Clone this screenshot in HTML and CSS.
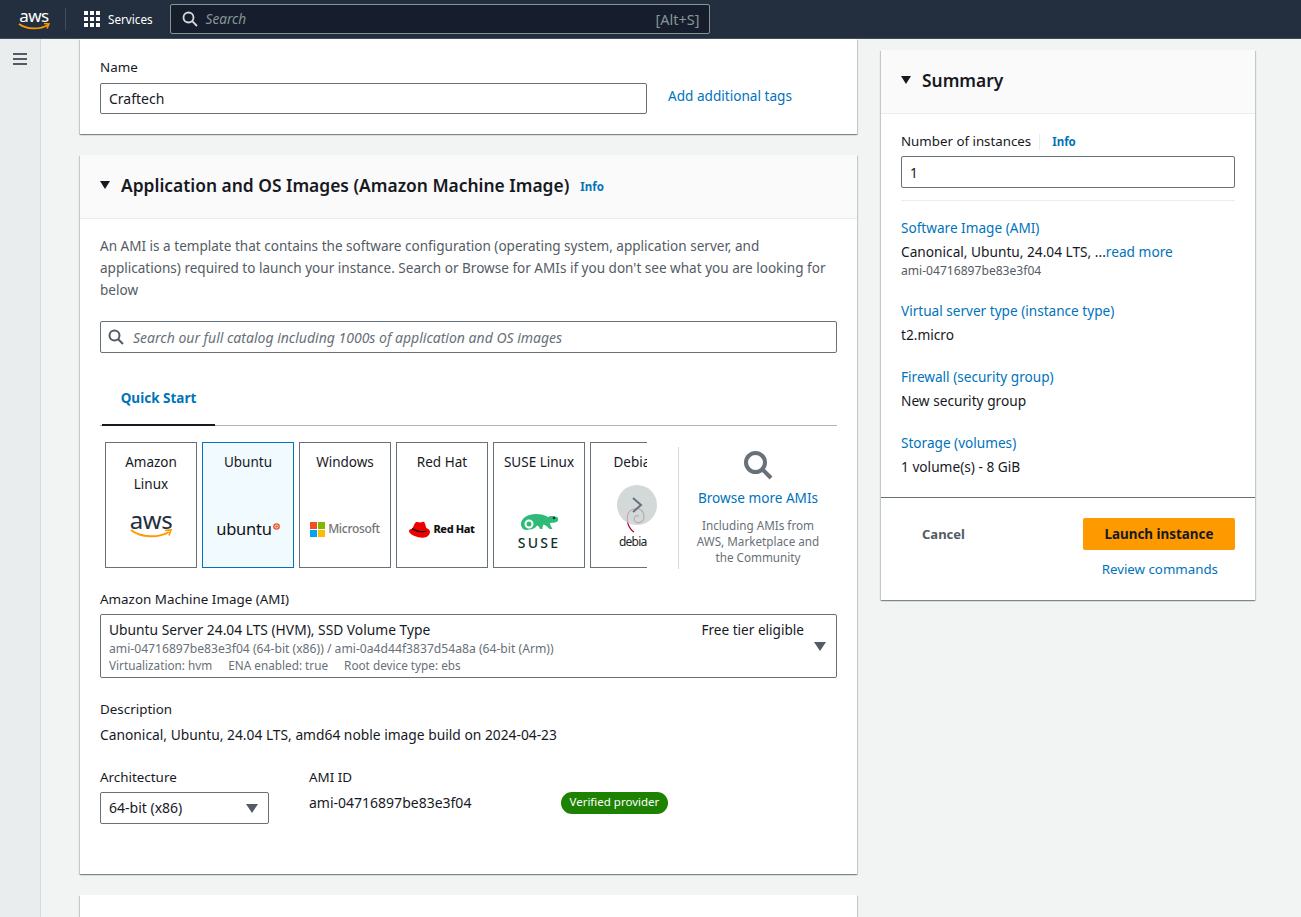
FILE: index.html
```html
<!DOCTYPE html>
<html>
<head>
  <title>Launch an instance</title>
  <meta charset="UTF-8" />
  <link rel="stylesheet" href="styles.css">
</head>
<body>

  <header class="topbar">
    <div class="aws-logo">
      <span class="aws-word">aws</span>
      <svg class="smile" width="32" height="8" viewBox="0 0 32 8"><path d="M1 1c8 5.500 20 6 29 1" fill="none" stroke="#ff9900" stroke-width="1.800"/><path d="M26 .5l5 .5-2 4.500" fill="none" stroke="#ff9900" stroke-width="1.500"/></svg>
    </div>
    <div class="top-sep"></div>
    <div class="services">
      <svg width="18" height="18" viewBox="0 0 18 18" fill="#fff"><rect x="1" y="1" width="4" height="4"/><rect x="7" y="1" width="4" height="4"/><rect x="13" y="1" width="4" height="4"/><rect x="1" y="7" width="4" height="4"/><rect x="7" y="7" width="4" height="4"/><rect x="13" y="7" width="4" height="4"/><rect x="1" y="13" width="4" height="4"/><rect x="7" y="13" width="4" height="4"/><rect x="13" y="13" width="4" height="4"/></svg>
      <span>Services</span>
    </div>
    <div class="top-search">
      <svg width="16" height="16" viewBox="0 0 16 16" fill="none" stroke="#d5dbdb" stroke-width="1.800"><circle cx="6.500" cy="6.500" r="5"/><path d="M10.200 10.200L15 15"/></svg>
      <span class="top-search-text">Search</span>
      <span class="shortcut">[Alt+S]</span>
    </div>
  </header>

  <div class="layout">
    <nav class="rail">
      <svg width="14" height="12" viewBox="0 0 14 12" fill="#545b64"><rect y="0" width="14" height="2"/><rect y="5" width="14" height="2"/><rect y="10" width="14" height="2"/></svg>
    </nav>

    <main class="content">
      <div class="left-col">

        <section class="card name-card">
          <div class="label">Name</div>
          <div class="name-row">
            <div class="input name-input">Craftech</div>
            <a class="link">Add additional tags</a>
          </div>
        </section>

        <section class="card ami-card">
          <div class="card-head">
            <span class="caret"></span>
            <h2>Application and OS Images (Amazon Machine Image)</h2>
            <a class="info">Info</a>
          </div>
          <div class="card-body">
            <p class="intro">An AMI is a template that contains the software configuration (operating system, application server, and applications) required to launch your instance. Search or Browse for AMIs if you don't see what you are looking for below</p>

            <div class="input ami-search">
              <svg width="16" height="16" viewBox="0 0 16 16" fill="none" stroke="#545b64" stroke-width="2"><circle cx="6.500" cy="6.500" r="5"/><path d="M10.200 10.200L15 15"/></svg>
              <span>Search our full catalog including 1000s of application and OS images</span>
            </div>

            <div class="tabs"><div class="tab">Quick Start</div></div>

            <div class="picker">
              <div class="carousel">
                <div class="tile-strip">
                  <div class="tile">
                    <div class="tile-name">Amazon Linux</div>
                    <div class="logo-aws">
                      <span>aws</span>
                      <svg width="42" height="10" viewBox="0 0 42 10"><path d="M1 1c10 8 28 8 38 2" fill="none" stroke="#ff9900" stroke-width="2"/><path d="M35 1.500l6-.5-2 5.500" fill="none" stroke="#ff9900" stroke-width="1.600"/></svg>
                    </div>
                  </div>
                  <div class="tile selected">
                    <div class="tile-name">Ubuntu</div>
                    <div class="tile-logo">
                      <span class="logo-ubuntu">ubuntu</span>
                      <svg class="ubuntu-mark" width="7" height="7" viewBox="0 0 8 8"><circle cx="4" cy="4" r="3.800" fill="#e95420"/><circle cx="4" cy="4" r="1.800" fill="none" stroke="#fff" stroke-width=".9"/></svg>
                    </div>
                  </div>
                  <div class="tile">
                    <div class="tile-name">Windows</div>
                    <div class="tile-logo tile-logo-ms">
                      <svg width="15" height="15" viewBox="0 0 15 15"><rect width="7" height="7" fill="#f25022"/><rect x="8" width="7" height="7" fill="#7fba00"/><rect y="8" width="7" height="7" fill="#00a4ef"/><rect x="8" y="8" width="7" height="7" fill="#ffb900"/></svg>
                      <span class="logo-ms">Microsoft</span>
                    </div>
                  </div>
                  <div class="tile">
                    <div class="tile-name">Red Hat</div>
                    <div class="tile-logo tile-logo-rh">
                      <svg width="21" height="17" viewBox="0 0 21 17"><path d="M6.500 1.500C8 .5 10 1.500 11.500 1.500S14 .5 15 1c1 .6 1.500 3.500 2.300 6 2 .8 3.700 2 3.700 3.700 0 3-3 6-7.500 6C7 16.700 0 13 0 10c0-1.500 1.500-2.300 3-2 1-.5 2.500-6 3.500-6.500z" fill="#e00"/><path d="M3 7.500c3 2.500 9.500 4.200 14.500 2.500" fill="none" stroke="#111" stroke-width="1.300"/></svg>
                      <span class="logo-rh">Red Hat</span>
                    </div>
                  </div>
                  <div class="tile">
                    <div class="tile-name">SUSE Linux</div>
                    <div class="tile-logo-suse">
                      <svg width="39" height="20" viewBox="0 0 39 20"><path d="M1 11C1 5 8 1 16 1c5 0 9 1 12 3 2-1.500 6-1.500 9 0 1.500 1 1.500 3 .5 4.500-2 1.500-5 1-7.500 1.500 0 2 1.500 4 2.500 6h-3c-2-2-3.500-4-6-4.500-1 2-1 3-1 4.500H20c-.5-1.500-1-3-3-3.500-1 2-4 4-8 4C4 18 1 15 1 11z" fill="#30ba78"/><circle cx="9" cy="11" r="3.500" fill="none" stroke="#fff" stroke-width="2"/><circle cx="34" cy="5" r="1.300" fill="#0c322c"/></svg>
                      <span class="logo-suse">SUSE</span>
                    </div>
                  </div>
                  <div class="tile">
                    <div class="tile-name">Debian</div>
                    <div class="tile-logo-debian">
                      <svg width="19" height="25" viewBox="0 0 19 25"><path d="M8 24C2 20 0 12 2 6 4 1 11-1 15 2c4 3 4 10 0 12-3 2-7 0-7-3s3-4 5-3" fill="none" stroke="#a80030" stroke-width="1.100"/></svg>
                      <span class="logo-debian">debian</span>
                    </div>
                  </div>
                </div>
                <div class="next-btn">
                  <svg width="12" height="18" viewBox="0 0 12 18" fill="none" stroke="#687078" stroke-width="2"><path d="M2 2l8 7-8 7"/></svg>
                </div>
              </div>
              <div class="browse">
                <svg width="30" height="30" viewBox="0 0 30 30" fill="none" stroke="#687078" stroke-width="4"><circle cx="12.500" cy="12.500" r="9.500"/><path d="M19.500 19.500L28 28"/></svg>
                <a class="link browse-link">Browse more AMIs</a>
                <p>Including AMIs from AWS, Marketplace and the Community</p>
              </div>
            </div>

            <div class="label ami-label">Amazon Machine Image (AMI)</div>
            <div class="ami-select">
              <div class="ami-top">
                <span>Ubuntu Server 24.04 LTS (HVM), SSD Volume Type</span>
                <span class="free">Free tier eligible</span>
              </div>
              <div class="ami-sub ami-ids">ami-04716897be83e3f04 (64-bit (x86)) / ami-0a4d44f3837d54a8a (64-bit (Arm))</div>
              <div class="ami-sub ami-meta"><span>Virtualization: hvm</span><span>ENA enabled: true</span><span>Root device type: ebs</span></div>
              <span class="select-caret"></span>
            </div>

            <div class="label desc-label">Description</div>
            <div class="desc">Canonical, Ubuntu, 24.04 LTS, amd64 noble image build on 2024-04-23</div>

            <div class="arch-row">
              <div class="arch-col">
                <div class="label">Architecture</div>
                <div class="arch-select">64-bit (x86)<span class="select-caret"></span></div>
              </div>
              <div class="id-col">
                <div class="label">AMI ID</div>
                <div class="ami-id">ami-04716897be83e3f04</div>
              </div>
              <span class="badge">Verified provider</span>
            </div>
          </div>
        </section>

        <section class="card next-card"></section>
      </div>

      <aside class="card summary">
        <div class="card-head">
          <span class="caret"></span>
          <h2>Summary</h2>
        </div>
        <div class="summary-body">
          <div class="count-label"><span>Number of instances</span><a class="info">Info</a></div>
          <div class="input count-input">1</div>
          <div class="summary-list">
            <div class="summary-item">
              <a class="link">Software Image (AMI)</a>
              <div class="value">Canonical, Ubuntu, 24.04 LTS, ...<a class="link">read more</a></div>
              <div class="small">ami-04716897be83e3f04</div>
            </div>
            <div class="summary-item">
              <a class="link">Virtual server type (instance type)</a>
              <div class="value">t2.micro</div>
            </div>
            <div class="summary-item">
              <a class="link">Firewall (security group)</a>
              <div class="value">New security group</div>
            </div>
            <div class="summary-item">
              <a class="link">Storage (volumes)</a>
              <div class="value">1 volume(s) - 8 GiB</div>
            </div>
          </div>
        </div>
        <div class="summary-foot">
          <div class="foot-row">
            <span class="cancel">Cancel</span>
            <span class="launch">Launch instance</span>
          </div>
          <a class="link review">Review commands</a>
        </div>
      </aside>
    </main>
  </div>

</body>
</html>
```

FILE: styles.css
```css
* {
  box-sizing: border-box;
}

html, body {
  height: 917px;
}

body {
  margin: 0;
  background: #f2f3f3;
  font-family: "Noto Sans", sans-serif;
  font-size: 13.600px;
  line-height: 22px;
  color: #16191f;
  overflow: hidden;
  display: flex;
  flex-direction: column;
}

h2, p {
  margin: 0;
}

.link {
  color: #0073bb;
}

/* top bar */
.topbar {
  height: 39px;
  flex: none;
  background: #232f3e;
  display: flex;
  align-items: center;
  color: #fff;
  border-bottom: 1px solid #414d5c;
}

.aws-logo {
  width: 32px;
  margin-left: 18px;
  display: flex;
  flex-direction: column;
  align-items: center;
  height: 24px;
}

.aws-word {
  font-size: 17px;
  line-height: 18px;
  letter-spacing: -0.5px;
}

.smile {
  margin-top: -2px;
}

.top-sep {
  width: 1px;
  height: 22px;
  background: #414d5c;
  margin-left: 15px;
}

.services {
  display: flex;
  align-items: center;
  gap: 7px;
  margin-left: 17px;
  font-size: 11.700px;
}

.top-search {
  width: 540px;
  height: 30px;
  margin-left: 17px;
  background: #161e2d;
  border: 1px solid #879596;
  border-radius: 2px;
  display: flex;
  align-items: center;
  padding: 0 9px 0 11px;
  font-size: 13.600px;
}

.top-search-text {
  margin-left: 8px;
  font-style: italic;
  color: #879596;
  flex: 1;
}

.shortcut {
  color: #879596;
  font-size: 14.500px;
}

/* page */
.layout {
  flex: 1;
  display: flex;
  min-height: 0;
}

.rail {
  width: 41px;
  flex: none;
  background: #eaeded;
  border-right: 1px solid #d5dbdb;
  padding: 14px 0 0 13px;
}

.rail svg {
  display: block;
}

.content {
  flex: 1;
  display: flex;
  align-items: flex-start;
  gap: 24px;
  padding-left: 39px;
}

.left-col {
  width: 777px;
  flex: none;
}

.card {
  background: #fff;
  box-shadow: 0 1px 1px 0 rgba(0, 28, 36, 0.3), 1px 1px 1px 0 rgba(0, 28, 36, 0.15), -1px 1px 1px 0 rgba(0, 28, 36, 0.15);
}

.label {
  font-size: 13.400px;
}

.input {
  border: 1px solid #687078;
  border-radius: 2px;
  background: #fff;
  display: flex;
  align-items: center;
}

/* name card */
.name-card {
  height: 95px;
  padding: 17px 20px 0;
}

.name-row {
  display: flex;
  align-items: center;
  margin-top: 5px;
}

.name-input {
  width: 547px;
  height: 31px;
  padding: 1px 8px 0;
  font-size: 14px;
}

.name-row .link {
  margin-left: 21px;
  margin-top: -6px;
}

/* ami card */
.ami-card {
  margin-top: 21px;
  height: 719px;
}

.card-head {
  height: 64px;
  background: #fafafa;
  border-bottom: 1px solid #eaeded;
  display: flex;
  align-items: center;
  padding: 0 20px 3px;
}

.caret {
  width: 0;
  height: 0;
  border-left: 5.500px solid transparent;
  border-right: 5.500px solid transparent;
  border-top: 8px solid #16191f;
  margin-right: 11px;
}

.card-head h2 {
  font-size: 17.400px;
  font-weight: 600;
  line-height: 24px;
}

.info {
  color: #0073bb;
  font-size: 11.500px;
  font-weight: 700;
  margin-left: 11px;
}

.card-head .info {
  margin-top: 3px;
}

.card-body {
  padding: 16px 20px 0;
}

.intro {
  color: #545b64;
  font-size: 13.550px;
}

.ami-search {
  height: 32px;
  margin-top: 20px;
  padding: 1px 7px 0;
  gap: 9px;
  font-style: italic;
  color: #687078;
  font-size: 14px;
}

.ami-search svg {
  margin-top: -1px;
}

.tabs {
  margin-top: 16px;
  height: 57px;
  border-bottom: 1px solid #aab7b8;
  padding-left: 2px;
}

.tab {
  width: 113px;
  height: 57px;
  border-bottom: 2px solid #16191f;
  color: #0073bb;
  font-weight: 700;
  font-size: 13.500px;
  text-align: center;
  padding-top: 18px;
}

/* os tiles */
.picker {
  display: flex;
  margin-top: 16px;
  padding-left: 5px;
}

.carousel {
  width: 542px;
  height: 127px;
  position: relative;
  flex: none;
}

.tile-strip {
  display: flex;
  gap: 5px;
  overflow: hidden;
  height: 127px;
}

.tile {
  width: 92px;
  height: 126px;
  flex: none;
  border: 1px solid #687078;
  text-align: center;
  padding: 8px 8px 0;
  display: flex;
  flex-direction: column;
  align-items: center;
}

.tile.selected {
  background: #f1faff;
  border-color: #0073bb;
}

.tile-name {
  height: 44px;
  font-size: 13.500px;
}

.tile-logo {
  display: flex;
  align-items: center;
  justify-content: center;
  gap: 1px;
  margin-top: 22px;
  height: 24px;
}

.logo-aws {
  display: flex;
  flex-direction: column;
  align-items: center;
  margin-top: 13px;
}

.logo-aws span {
  font-size: 24px;
  line-height: 24px;
  letter-spacing: -0.5px;
  color: #232f3e;
}

.logo-aws svg {
  margin-top: -3px;
}

.logo-ubuntu {
  font-size: 16.500px;
  letter-spacing: -0.2px;
  color: #111;
}

.ubuntu-mark {
  margin-bottom: 6px;
}

.tile-logo-ms {
  gap: 3px;
}

.logo-ms {
  font-size: 12px;
  letter-spacing: -0.3px;
  color: #737373;
  font-weight: 500;
}

.tile-logo-rh {
  gap: 3px;
}

.logo-rh {
  font-size: 11px;
  font-weight: 800;
  letter-spacing: -0.4px;
  color: #111;
}

.tile-logo-suse {
  display: flex;
  flex-direction: column;
  align-items: center;
  margin-top: 18px;
}

.logo-suse {
  font-size: 14px;
  line-height: 16px;
  letter-spacing: 2.200px;
  color: #0c322c;
  font-weight: 500;
  margin-top: 2px;
}

.tile-logo-debian {
  display: flex;
  flex-direction: column;
  align-items: center;
  margin-top: 13px;
}

.logo-debian {
  font-size: 12px;
  line-height: 14px;
  letter-spacing: -0.8px;
  color: #222;
  margin-top: 2px;
}

.next-btn {
  position: absolute;
  left: 512px;
  top: 43px;
  width: 40px;
  height: 40px;
  border-radius: 50%;
  background: rgba(200, 207, 207, 0.8);
  display: flex;
  align-items: center;
  justify-content: center;
}

.browse {
  margin-left: 31px;
  width: 159px;
  height: 122px;
  margin-top: 5px;
  border-left: 1px solid #d5dbdb;
  text-align: center;
  display: flex;
  flex-direction: column;
  align-items: center;
  padding-top: 3px;
}

.browse-link {
  margin-top: 7px;
}

.browse p {
  margin-top: 8px;
  width: 130px;
  font-size: 11.700px;
  line-height: 16px;
  color: #687078;
}

/* ami select */
.ami-label {
  margin-top: 19px;
}

.ami-select {
  height: 64px;
  margin-top: 4px;
  border: 1px solid #687078;
  border-radius: 2px;
  padding: 5px 8px 0;
  position: relative;
}

.ami-top {
  display: flex;
  justify-content: space-between;
  padding-right: 24px;
  line-height: 20px;
  font-size: 13.800px;
}

.free {
  font-size: 13.600px;
}

.ami-sub {
  font-size: 12.150px;
  line-height: 16px;
  color: #687078;
}

.ami-ids {
  margin-top: 1px;
}

.ami-meta {
  display: flex;
  gap: 16px;
  font-size: 11.750px;
}

.select-caret {
  position: absolute;
  right: 10px;
  top: 50%;
  margin-top: -4px;
  width: 0;
  height: 0;
  border-left: 6px solid transparent;
  border-right: 6px solid transparent;
  border-top: 9px solid #545b64;
}

.desc-label {
  margin-top: 20px;
}

.desc {
  margin-top: 4px;
  font-size: 13.800px;
}

.arch-row {
  display: flex;
  margin-top: 20px;
  align-items: flex-start;
}

.arch-col {
  width: 169px;
}

.arch-select {
  height: 32px;
  margin-top: 4px;
  border: 1px solid #687078;
  border-radius: 2px;
  padding: 0 8px;
  display: flex;
  align-items: center;
  position: relative;
  font-size: 14px;
}

.id-col {
  margin-left: 40px;
  width: 252px;
}

.ami-id {
  margin-top: 4px;
  font-size: 14px;
}

.badge {
  margin-top: 26px;
  height: 22px;
  padding: 0 8.500px;
  border-radius: 11px;
  background: #1d8102;
  color: #fff;
  font-size: 11.500px;
  line-height: 20px;
}

.next-card {
  margin-top: 21px;
  height: 100px;
}

/* summary */
.summary {
  width: 374px;
  flex: none;
  margin-top: 11px;
}

.summary-body {
  padding: 16px 20px 0;
  height: 383px;
}

.count-label {
  display: flex;
  align-items: center;
  height: 22px;
  font-size: 13.300px;
}

.count-label .info {
  border-left: 1px solid #eaeded;
  padding-left: 12px;
  margin-left: 8px;
  line-height: 16px;
  margin-top: 1px;
}

.count-input {
  height: 32px;
  margin-top: 4px;
  padding: 1px 8px 0;
}

.summary-list {
  margin-top: 12px;
  padding-top: 16px;
  border-top: 1px solid #eaeded;
}

.summary-item {
  margin-bottom: 20px;
}

.value {
  margin-top: 2px;
  font-size: 13.700px;
}

.small {
  font-size: 12.100px;
  line-height: 14px;
  margin-top: 1px;
  padding-bottom: 2px;
  color: #545b64;
}

.summary-foot {
  height: 103px;
  border-top: 1px solid #687078;
  padding: 20px 20px 0;
}

.foot-row {
  display: flex;
  align-items: center;
  justify-content: space-between;
}

.cancel {
  margin-left: 21px;
  font-weight: 700;
  font-size: 13px;
  color: #545b64;
}

.launch {
  width: 152px;
  height: 32px;
  background: #ff9900;
  border-radius: 2px;
  font-weight: 700;
  font-size: 13.400px;
  text-align: center;
  line-height: 32px;
}

.review {
  display: block;
  margin-top: 8px;
  text-align: right;
  padding-right: 17px;
  font-size: 13.300px;
}
```
